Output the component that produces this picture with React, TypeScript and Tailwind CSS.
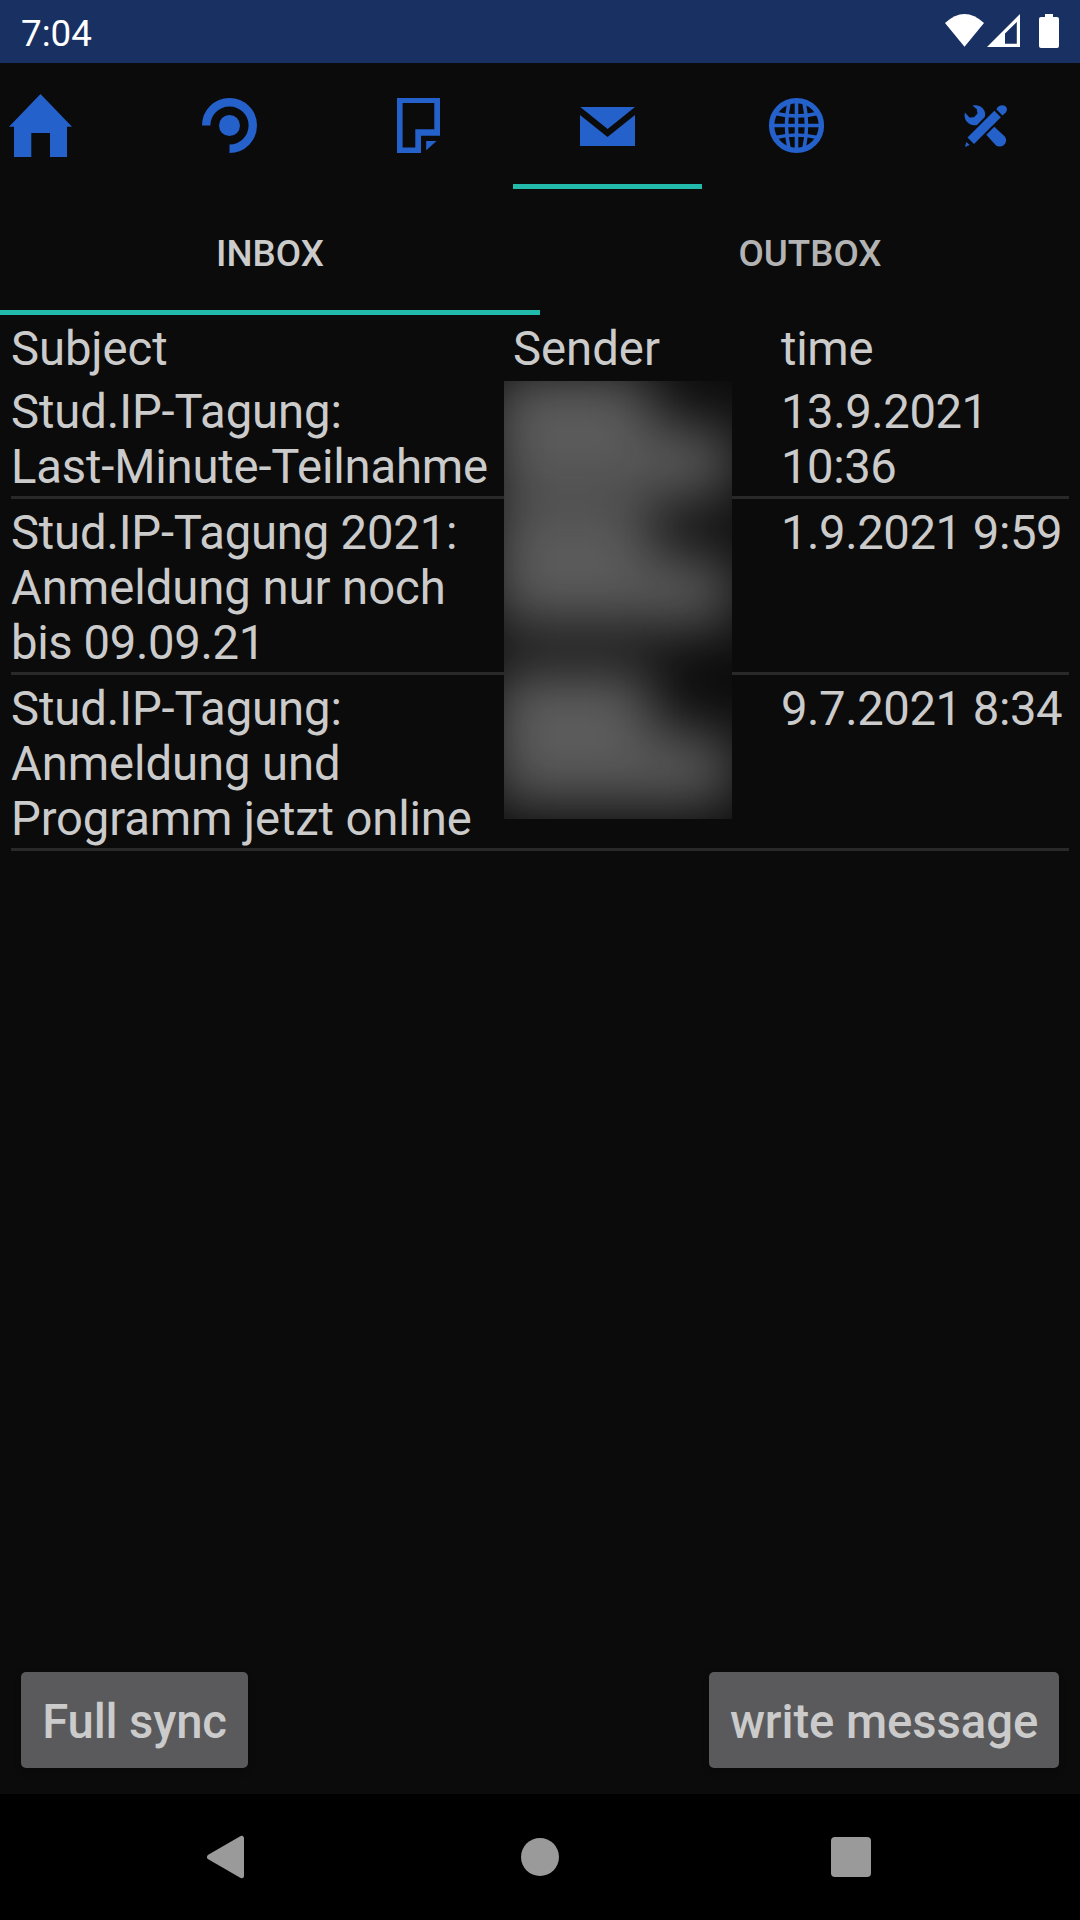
import React from "react";

const BLUE = "#2561cb";

function HomeIcon() {
  return (
    <svg width="63" height="63" viewBox="9 94 63 63" fill={BLUE}>
      <path d="M40.5 94L72 126.8H67V157H50V133H31.3V157H14V126.8H9Z" />
    </svg>
  );
}

function SeminarIcon() {
  return (
    <svg width="63" height="63" viewBox="-31.5 -31.5 63 63">
      <path d="M-23.3 0A23.3 23.3 0 1 1 0 23.3" fill="none" stroke={BLUE} strokeWidth="8.4" />
      <circle r="10.5" fill={BLUE} />
    </svg>
  );
}

function FileIcon() {
  return (
    <svg width="63" height="63" viewBox="387 94 63 63" fill={BLUE}>
      <path
        fillRule="evenodd"
        d="M397 98H440V135.7H421V153H397ZM402.6 103V147.5H415.3V129.3H434.3V103Z"
      />
      <path d="M426.2 141H436.6L426.2 150.3Z" />
    </svg>
  );
}

function MailIcon() {
  return (
    <svg width="63" height="63" viewBox="576 94 63 63" fill={BLUE}>
      <path d="M580.3 107H635L607.6 129Z" />
      <path d="M580 115L607.5 137L635 115V146H580Z" />
    </svg>
  );
}

function GlobeIcon() {
  return (
    <svg width="63" height="63" viewBox="-31.5 -31.5 63 63" fill="none" stroke={BLUE} strokeWidth="3.6">
      <circle r="24.9" strokeWidth="5.4" />
      <path d="M0 -25V25M-25 0H25" />
      <path d="M-7.500 -23Q-12.500 0 -7.500 23M7.500 -23Q12.500 0 7.500 23" />
      <path d="M-21 -12Q0 -7 21 -12M-21 12Q0 7 21 12" />
    </svg>
  );
}

function ToolsIcon() {
  return (
    <svg width="63" height="63" viewBox="954.5 94 63 63" fill={BLUE}>
      <path d="M973 105.500C981 103.500 987.500 110 985.300 117L977.500 124.900C970 126.500 963.500 120.500 965.400 112.500L970 117.400L974.500 117.200L978 113.500L977.300 109.200Z" />
      <path d="M994.8 126.800L1005.300 136.500C1009.600 142 1002.500 149.800 996.300 145.200L986.800 134.800Z" />
      <path d="M994.8 110.800L1001.300 117.300L974.500 144L968 137.500Z" />
      <path d="M996.800 109.300C1000 102 1011 105.500 1006.300 112.500L1003 115.500Z" />
      <path d="M966.8 142L970.200 145L965.500 147Z" />
    </svg>
  );
}

const TABS = [
  { name: "home", Icon: HomeIcon },
  { name: "courses", Icon: SeminarIcon },
  { name: "files", Icon: FileIcon },
  { name: "messages", Icon: MailIcon },
  { name: "web", Icon: GlobeIcon },
  { name: "settings", Icon: ToolsIcon },
];

type Line = { text: string; tracking: string };

const MESSAGES: { id: number; subject: Line[]; time: Line[] }[] = [
  {
    id: 1,
    subject: [
      { text: "Stud.IP-Tagung:", tracking: "tracking-[-0.1px]" },
      { text: "Last-Minute-Teilnahme", tracking: "tracking-[-0.18px]" },
    ],
    time: [
      { text: "13.9.2021", tracking: "tracking-[-0.46px]" },
      { text: "10:36", tracking: "tracking-[-0.46px]" },
    ],
  },
  {
    id: 2,
    subject: [
      { text: "Stud.IP-Tagung 2021:", tracking: "tracking-[-0.2px]" },
      { text: "Anmeldung nur noch", tracking: "tracking-[-0.05px]" },
      { text: "bis 09.09.21", tracking: "tracking-[-0.38px]" },
    ],
    time: [{ text: "1.9.2021 9:59", tracking: "tracking-[-0.46px]" }],
  },
  {
    id: 3,
    subject: [
      { text: "Stud.IP-Tagung:", tracking: "tracking-[-0.1px]" },
      { text: "Anmeldung und", tracking: "tracking-[-0.1px]" },
      { text: "Programm jetzt online", tracking: "tracking-[-0.15px]" },
    ],
    time: [{ text: "9.7.2021 8:34", tracking: "tracking-[-0.46px]" }],
  },
];

function Lines({ items }: { items: Line[] }) {
  return (
    <div>
      {items.map((line) => (
        <div key={line.text} className={`whitespace-nowrap ${line.tracking}`}>
          {line.text}
        </div>
      ))}
    </div>
  );
}

function StatusBar() {
  return (
    <div className="flex h-[63px] shrink-0 items-center justify-between bg-[#183162] pl-[21px] text-[36.75px] text-white">
      <span className="pt-[4px] leading-[43px]">7:04</span>
      <svg width="140" height="63" viewBox="940 0 140 63" fill="#fff">
        <path d="M945 23Q964.500 5 984 23L964.500 46.700Z" />
        <path fillRule="evenodd" d="M1020 14V47H987ZM1016.800 22L1005 33.500V43.700H1016.800Z" />
        <path d="M1045 14H1053V17H1057Q1059 17 1059 19V46Q1059 48 1057 48H1041Q1039 48 1039 46V19Q1039 17 1041 17H1045Z" />
      </svg>
    </div>
  );
}

/* Redacted sender names: text-shaped blocks blurred together inside a clipped box. */
function SenderMask() {
  return (
    <div className="absolute left-[504px] top-[66px] h-[438px] w-[228px] overflow-hidden bg-[#0d0d0d]">
      <div className="absolute inset-0 blur-[28px]">
        <div className="absolute left-[-10px] top-[-6px] h-[54px] w-[158px] bg-[#5e5e5e]" />
        <div className="absolute left-[-10px] top-[46px] h-[72px] w-[238px] bg-[#5a5a5a]" />
        <div className="absolute left-[-10px] top-[126px] h-[54px] w-[158px] bg-[#5e5e5e]" />
        <div className="absolute left-[-10px] top-[175px] h-[71px] w-[238px] bg-[#5a5a5a]" />
        <div className="absolute left-[-10px] top-[290px] h-[64px] w-[158px] bg-[#5e5e5e]" />
        <div className="absolute left-[-10px] top-[352px] h-[72px] w-[238px] bg-[#5a5a5a]" />
      </div>
    </div>
  );
}

export default function App() {
  return (
    <div className="flex h-[1920px] w-[1080px] flex-col overflow-hidden bg-[#0b0b0b] font-[Roboto,sans-serif] text-[#cbcbcb]">
      <StatusBar />

      <nav className="flex h-[126px] shrink-0 justify-end overflow-hidden">
        {TABS.map(({ name, Icon }) => (
          <div
            key={name}
            className={
              name === "messages"
                ? "flex w-[189px] shrink-0 items-center justify-center border-b-[5px] border-[#22bbab] pt-[4px]"
                : "flex w-[189px] shrink-0 items-center justify-center border-b-[5px] border-transparent pt-[4px]"
            }
          >
            <Icon />
          </div>
        ))}
      </nav>

      <div className="grid h-[126px] shrink-0 grid-cols-2 text-[36.75px] font-medium">
        <div className="flex items-center justify-center border-b-[5px] border-[#22bbab] pt-[8px]">INBOX</div>
        <div className="flex items-center justify-center border-b-[5px] border-transparent pt-[8px] text-[#b3b3b3]">
          OUTBOX
        </div>
      </div>

      <main className="relative flex-1 px-[11px] text-[47.25px] leading-[55px]">
        <div className="grid grid-cols-[502px_268px_1fr] pb-px pt-[7px]">
          <div className="tracking-[-0.1px]">Subject</div>
          <div>Sender</div>
          <div className="tracking-[-0.3px]">time</div>
        </div>
        {MESSAGES.map((m) => (
          <div
            key={m.id}
            className="grid grid-cols-[502px_268px_1fr] border-b-[3px] border-[#292929] pb-px pt-[7px]"
          >
            <Lines items={m.subject} />
            <div />
            <Lines items={m.time} />
          </div>
        ))}
        <SenderMask />
      </main>

      <div className="flex shrink-0 justify-between px-[21px] pb-[26px] text-[47.25px] font-medium">
        <button className="h-[96px] w-[227px] whitespace-nowrap rounded-[5px] bg-[#5a5a5c] pt-[4px] tracking-[-0.15px] shadow-[0_3px_6px_rgba(0,0,0,0.25)]">
          Full sync
        </button>
        <button className="h-[96px] w-[350px] whitespace-nowrap rounded-[5px] bg-[#5a5a5c] pt-[4px] tracking-[-0.08px] shadow-[0_3px_6px_rgba(0,0,0,0.25)]">
          write message
        </button>
      </div>

      <div className="h-[126px] shrink-0 bg-black">
        <svg width="1080" height="126" viewBox="0 1794 1080 126" fill="#9a9a9a" stroke="#9a9a9a" strokeLinejoin="round">
          <path d="M209.500 1857L241.500 1838.300V1875.700Z" strokeWidth="5" />
          <circle cx="540" cy="1857" r="19" stroke="none" />
          <rect x="831" y="1837" width="40" height="40" rx="4" stroke="none" />
        </svg>
      </div>
    </div>
  );
}
